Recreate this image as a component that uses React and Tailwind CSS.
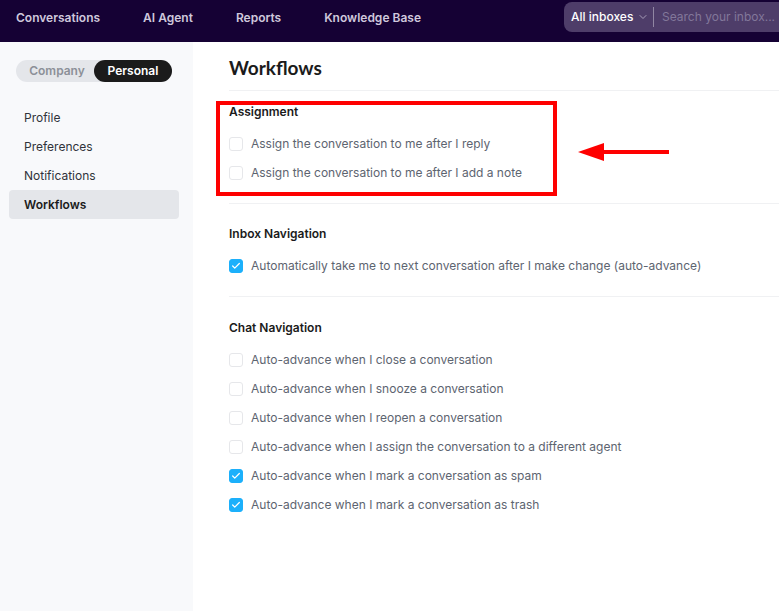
import React, { useState } from 'react';
import { Check, ChevronDown } from 'lucide-react';

const navLinks = ['Conversations', 'AI Agent', 'Reports', 'Knowledge Base'];

const menuItems = ['Profile', 'Preferences', 'Notifications', 'Workflows'];

const assignmentOptions = [
  { id: 'assign-reply', label: 'Assign the conversation to me after I reply', checked: false },
  { id: 'assign-note', label: 'Assign the conversation to me after I add a note', checked: false },
];

const inboxOptions = [
  { id: 'inbox-advance', label: 'Automatically take me to next conversation after I make change (auto-advance)', checked: true },
];

const chatOptions = [
  { id: 'chat-close', label: 'Auto-advance when I close a conversation', checked: false },
  { id: 'chat-snooze', label: 'Auto-advance when I snooze a conversation', checked: false },
  { id: 'chat-reopen', label: 'Auto-advance when I reopen a conversation', checked: false },
  { id: 'chat-assign', label: 'Auto-advance when I assign the conversation to a different agent', checked: false },
  { id: 'chat-spam', label: 'Auto-advance when I mark a conversation as spam', checked: true },
  { id: 'chat-trash', label: 'Auto-advance when I mark a conversation as trash', checked: true },
];

const Option = ({ option }) => {
  const [checked, setChecked] = useState(option.checked);

  return (
    <div className="flex items-center gap-2 h-5">
      <span className="relative flex w-3.5 h-3.5 shrink-0">
        <input
          id={option.id}
          type="checkbox"
          checked={checked}
          onChange={(e) => setChecked(e.target.checked)}
          className="appearance-none w-3.5 h-3.5 rounded-[3px] border border-[#e6e7ea] bg-white checked:border-[#1cb0fb] checked:bg-[#1cb0fb]"
        />
        {checked && <Check className="absolute inset-0 m-auto w-2.5 h-2.5 text-white pointer-events-none" strokeWidth={3} />}
      </span>
      <label htmlFor={option.id} className="text-xs leading-5 text-[#5d6470]">{option.label}</label>
    </div>
  );
};

const OptionList = ({ options }) => (
  <div className="flex flex-col gap-[9px]">
    {options.map((option) => <Option key={option.id} option={option} />)}
  </div>
);

const Header = () => (
  <header className="flex items-start h-[42px] pl-4 bg-[#150134]">
    <nav className="flex gap-[43px] pt-2">
      {navLinks.map((link) => (
        <a key={link} href="#" className="text-xs leading-5 font-semibold text-[#cfc8dc] whitespace-nowrap">{link}</a>
      ))}
    </nav>
    <div className="ml-auto mt-[2px] w-[215px] h-[30px] flex items-center pl-[7px] rounded-l-lg bg-[#4e3d69]">
      <div className="relative flex items-center">
        <select aria-label="Inbox" className="appearance-none w-[78px] bg-transparent text-xs leading-5 font-medium text-white">
          <option>All inboxes</option>
        </select>
        <ChevronDown className="absolute right-0 w-3 h-3 text-[#a79db8] pointer-events-none" />
      </div>
      <div className="w-px h-5 ml-1 mr-2 shrink-0 bg-[#9187a3]"></div>
      <input
        type="text"
        aria-label="Search"
        placeholder="Search your inbox..."
        className="flex-1 min-w-0 bg-transparent text-xs leading-5 text-white placeholder:text-[#82779a]"
      />
    </div>
  </header>
);

const Sidebar = () => (
  <aside className="w-[193px] shrink-0 pt-[18px] bg-[#f8f9fb]">
    <div className="flex w-[156px] ml-4 rounded-full bg-[#e4e6ea] text-xs leading-[22px] font-semibold">
      <button type="button" className="flex-1 pl-1 text-[#8c9098]">Company</button>
      <button type="button" className="w-[78px] rounded-full bg-[#1b1b1b] text-white">Personal</button>
    </div>
    <nav className="flex flex-col mt-[21px] ml-[9px] mr-3.5">
      {menuItems.map((item) => (
        <a
          key={item}
          href="#"
          className={item === 'Workflows'
            ? 'px-[15px] rounded text-xs leading-[29px] font-semibold text-[#1b1b1b] bg-[#e4e6ea]'
            : 'px-[15px] text-xs leading-[29px] text-[#30333a]'}
        >
          {item}
        </a>
      ))}
    </nav>
  </aside>
);

const App = () => {
  return (
    <div className="min-h-screen flex flex-col bg-white font-['Inter',sans-serif] overflow-x-hidden">
      <Header />
      <div className="flex flex-1">
        <Sidebar />
        <main className="flex-1 min-w-0 pl-9 text-[#1b1b1b]">
          <h1 className="pt-3 pb-2 text-[19px] leading-7 font-bold font-['Lato',sans-serif] border-b border-[#f0f1f3]">Workflows</h1>

          <section className="relative pt-[11px] pb-5 border-b border-[#f0f1f3]">
            <h2 className="mb-3 text-xs leading-5 font-semibold">Assignment</h2>
            <OptionList options={assignmentOptions} />

            {/* Callout box and arrow */}
            <div className="absolute -left-[13px] top-2.5 w-[341px] h-[95px] border-4 border-[#fe0000] pointer-events-none"></div>
            <svg className="absolute left-[349px] top-[52px] w-[91px] h-[18px]" viewBox="0 0 91 18" aria-hidden="true">
              <path d="M0 9 L26 0 V18 Z" fill="#fe0000" />
              <rect x="25" y="7" width="66" height="4" fill="#fe0000" />
            </svg>
          </section>

          <section className="py-5 border-b border-[#f0f1f3]">
            <h2 className="mb-3 text-xs leading-5 font-semibold">Inbox Navigation</h2>
            <OptionList options={inboxOptions} />
          </section>

          <section className="pt-[21px] pb-5">
            <h2 className="mb-3 text-xs leading-5 font-semibold">Chat Navigation</h2>
            <OptionList options={chatOptions} />
          </section>
        </main>
      </div>
    </div>
  );
};

export default App;
